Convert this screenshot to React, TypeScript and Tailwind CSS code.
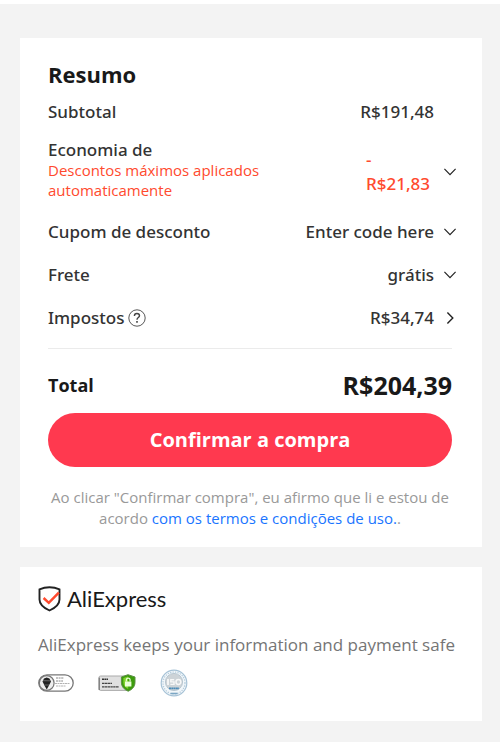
import React from 'react';

const ChevronDown = () => (
  <svg className="w-3 h-2" viewBox="0 0 12 8" fill="none" stroke="#222" strokeWidth="1.2">
    <path d="M0.4 0.8 6 6.6l5.6-5.8" />
  </svg>
);

const ChevronRight = () => (
  <svg className="w-2 h-3" viewBox="0 0 8 12" fill="none" stroke="#222" strokeWidth="1.4">
    <path d="M1.4 0.6 6.8 6l-5.4 5.4" />
  </svg>
);

const HelpIcon = () => (
  <svg className="w-[18px] h-[18px]" viewBox="0 0 18 18" fill="none" stroke="#444">
    <circle cx="9" cy="9" r="8.2" strokeWidth=".9" />
    <path d="M6.4 7c0-1.6 1-2.5 2.5-2.5s2.6.9 2.6 2.3c0 1.7-2.5 1.9-2.5 3.9" strokeWidth="1.4" />
    <path d="M9 12.1v1.7" strokeWidth="1.6" />
  </svg>
);

const ShieldCheck = () => (
  <svg className="w-[23px] h-[26px]" viewBox="0 0 23 26" fill="none">
    <path
      d="M11.5 1.3C8.3 1.3 4.6 2 1.5 3.3v10.2c0 5.4 4.6 8.6 10 11 5.4-2.4 10-5.6 10-11V3.3C18.4 2 14.7 1.3 11.5 1.3Z"
      stroke="#222"
      strokeWidth="1.9"
    />
    <path d="m5.6 12 5.2 4.8L20.8 6.6" stroke="#ff4a2e" strokeWidth="2.5" />
  </svg>
);

const NortonBadge = () => (
  <svg className="w-9 h-[18px]" viewBox="0 0 36 18" fill="none" role="img" aria-label="Certificado de segurança">
    <rect x=".8" y=".8" width="34.4" height="16.4" rx="8.2" fill="#fff" stroke="#777" strokeWidth="1.3" />
    <circle cx="8.7" cy="9" r="7.4" fill="#eee" stroke="#777" strokeWidth="1.2" />
    <path d="M4.5 7.5 6 4.4l2.7-.8 2.7.8L13 7.5l-2.2 4.2-2.1 3.8-2.1-3.8Z" fill="#222" />
    <path d="m5 6.7 7.4.1M6.4 11h4.6" stroke="#888" strokeWidth=".7" />
    <path d="M18 4h8M18 7h7" stroke="#888" strokeWidth="1" strokeDasharray="2 .6" />
    <path d="M17 9.5h15M18 12h10" stroke="#aaa" strokeWidth=".9" strokeDasharray="2 .5" />
  </svg>
);

const SslBadge = () => (
  <svg className="w-[38px] h-[18px]" viewBox="0 0 38 18" fill="none" role="img" aria-label="Site seguro">
    <rect x="1" y="2" width="31" height="14.4" rx="1.6" fill="#e0e0e0" stroke="#aaa" />
    <path d="M1.2 16V3.6" stroke="#666" strokeWidth="1" />
    <path d="M4 5.3h6" stroke="#333" strokeWidth="1.6" strokeDasharray="2 .4" />
    <path d="M4 9.3h10M4 12.8h17" stroke="#444" strokeWidth="1.3" strokeDasharray="2.4 .4" />
    <path d="M30 .7 23.4 3v5.2c0 4.6 2.8 7.2 6.8 9 4-1.8 6.8-4.4 6.8-9V3Z" fill="#3c9c0c" stroke="#5b8f43" />
    <path d="M30 2.6 25.4 4v4.4c0 3 1.6 4.8 4.8 6.5Z" fill="#7fd32c" />
    <rect x="27" y="7.5" width="6.4" height="5" fill="#eaffd8" />
    <path d="M28.3 7.6V6a1.9 1.9 0 0 1 3.8 0v1.6" stroke="#eaffd8" strokeWidth="1.2" />
  </svg>
);

const SealBadge = () => (
  <svg className="w-7 h-7" viewBox="0 0 28 28" fill="none" role="img" aria-label="Selo de qualidade">
    <circle cx="14" cy="14" r="12.8" fill="#f2f7fa" stroke="#a6c2d6" strokeWidth="1.2" />
    <circle cx="14" cy="14" r="11" stroke="#b4cbdb" strokeWidth="1.2" strokeDasharray="1.3 1.2" />
    <circle cx="14" cy="13" r="8.6" fill="#cdd3d7" stroke="#aebfca" strokeWidth=".8" />
    <path d="M8 10v6" stroke="#f8f8f8" strokeWidth="1.8" />
    <path d="M14.2 10.8h-3.4v2.1h3.2V15.4h-3.6" stroke="#f8f8f8" strokeWidth="1.4" />
    <circle cx="18.4" cy="13" r="2.4" stroke="#f8f8f8" strokeWidth="1.5" />
    <path d="M9 19.3h10" stroke="#4b8bb8" strokeWidth="1.8" strokeDasharray="2 .3" />
    <path d="M10.6 24.5h7" stroke="#7ba6c4" strokeWidth="1.6" />
  </svg>
);

interface SummaryRowProps {
  label: string;
  value: string;
  icon?: React.ReactNode;
  help?: boolean;
}

const SummaryRow: React.FC<SummaryRowProps> = ({ label, value, icon, help }) => (
  <div className="flex items-center text-[17px] leading-6 font-medium text-[#333]">
    <span>{label}</span>
    {help && (
      <button type="button" aria-label="Ajuda sobre impostos" className="ml-1">
        <HelpIcon />
      </button>
    )}
    <span className="ml-auto">{value}</span>
    {icon ? (
      <button type="button" aria-label={`Abrir ${label}`} className="ml-2 w-4 flex justify-center">
        {icon}
      </button>
    ) : (
      <span className="ml-2 w-4" />
    )}
  </div>
);

const OrderSummary = () => (
  <section className="bg-white pl-7 pr-[30px] pt-5 pb-[18px]">
    <h2 className="text-[22px] leading-8 font-bold text-[#191919]">Resumo</h2>
    <div className="-mr-1.5 mt-2.5 font-['Noto_Sans','Open_Sans',sans-serif]">
      <SummaryRow label="Subtotal" value="R$191,48" />
      <div className="flex items-center mt-4">
        <div className="w-60">
          <p className="text-[17px] leading-5 font-medium text-[#333]">Economia de</p>
          <p className="font-['Open_Sans','Noto_Sans',sans-serif] text-[15px] leading-5 text-[#ff4a2e]">
            Descontos máximos aplicados automaticamente
          </p>
        </div>
        <div className="ml-auto pt-1 w-[68px] text-[17px] leading-6 font-medium text-[#ff4a2e]">
          -<br />
          R$21,83
        </div>
        <button type="button" aria-label="Abrir Economia de" className="ml-2 pt-1 w-4 flex justify-center">
          <ChevronDown />
        </button>
      </div>
      <div className="mt-5 flex flex-col gap-[19px]">
        <SummaryRow label="Cupom de desconto" value="Enter code here" icon={<ChevronDown />} />
        <SummaryRow label="Frete" value="grátis" icon={<ChevronDown />} />
        <SummaryRow label="Impostos" value="R$34,74" icon={<ChevronRight />} help />
      </div>
    </div>
    <hr className="mt-[18px] border-[#ebebeb]" />
    <div className="flex items-center justify-between mt-5 text-[#191919] font-bold">
      <span className="text-lg leading-8">Total</span>
      <span className="text-[25px] leading-8">R$204,39</span>
    </div>
    <button
      type="button"
      className="mt-3 w-full h-[54px] rounded-full bg-[#ff394f] text-white text-xl font-bold"
    >
      Confirmar a compra
    </button>
    <p className="mt-5 text-[15px] leading-[21px] text-center text-[#999]">
      Ao clicar "Confirmar compra", eu afirmo que li e estou de acordo{' '}
      <a href="#termos" className="text-[#1a75ff]">com os termos e condições de uso.</a>.
    </p>
  </section>
);

const SafetyCard = () => (
  <section className="bg-white px-[18px] pt-[18px] pb-6">
    <div className="flex items-center gap-1.5">
      <ShieldCheck />
      <span className="font-['Lato','Inter',sans-serif] text-[22px] leading-7 text-[#191919]">AliExpress</span>
    </div>
    <p className="mt-5 text-[17px] leading-6 text-[#757575] whitespace-nowrap">
      AliExpress keeps your information and payment safe
    </p>
    <div className="flex items-center gap-6 mt-3">
      <NortonBadge />
      <SslBadge />
      <SealBadge />
    </div>
  </section>
);

export default function App() {
  return (
    <main className="min-h-screen border-t-4 border-white bg-[#f3f3f3] pl-5 pr-[18px] pt-[34px] pb-5 font-['Open_Sans','Noto_Sans',sans-serif]">
      <div className="flex flex-col gap-5">
        <OrderSummary />
        <SafetyCard />
      </div>
    </main>
  );
}
